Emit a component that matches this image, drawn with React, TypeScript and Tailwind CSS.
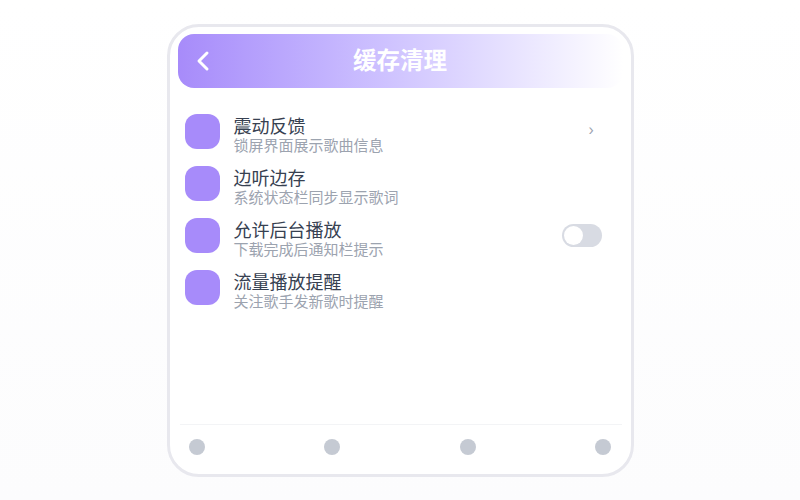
import { ChevronLeft } from 'lucide-react';

const rows = [
  { title: '震动反馈', sub: '锁屏界面展示歌曲信息', trailing: 'chevron' },
  { title: '边听边存', sub: '系统状态栏同步显示歌词', trailing: '' },
  { title: '允许后台播放', sub: '下载完成后通知栏提示', trailing: 'toggle' },
  { title: '流量播放提醒', sub: '关注歌手发新歌时提醒', trailing: '' },
];

const App = () => {
  return (
    <div className="h-screen w-full overflow-hidden pt-6 pl-[167px] bg-gradient-to-b from-white to-[#fcfcfd] font-['Inter','Noto_Sans_CJK_SC',sans-serif]">
      <div className="w-[467px] h-[453px] rounded-[32px] border-[3px] border-[#e8e8ee] bg-white pt-[7px] px-2 flex flex-col">
        <header className="relative h-[54px] rounded-2xl bg-gradient-to-r from-[#a78bfa] to-white flex items-center justify-center">
          <ChevronLeft className="absolute left-[9px] top-[11px] w-8 h-8 text-white" strokeWidth={2.25} />
          <h1 className="text-[23.5px] font-semibold text-white pr-px">缓存清理</h1>
        </header>
        <main className="flex-1 pt-[26px] pl-[7px] pr-[12px] flex flex-col gap-[17px]">
          {rows.map((row) => (
            <div key={row.title} className="h-[35px] flex items-center">
              <div className="w-[35px] h-[35px] rounded-xl bg-[#a78bfa] shrink-0" />
              <div className="ml-[13.5px] flex-1 pt-[8px]">
                <div className="text-lg leading-[20px] text-[#374151]">{row.title}</div>
                <div className="text-[15px] leading-[18px] text-[#9ca3af]">{row.sub}</div>
              </div>
              {row.trailing === 'chevron' && <span className="mr-[17px] -mt-[3px] text-sm text-[#9ca3af]">›</span>}
              {row.trailing === 'toggle' && (
                <div className="w-10 h-[23px] rounded-full bg-[#d8dbe3] p-[2px] mr-[9px]">
                  <div className="w-[19px] h-[19px] rounded-full bg-white" />
                </div>
              )}
            </div>
          ))}
        </main>
        <footer className="h-[47px] mb-[3px] ml-[2px] mr-px border-t border-[#f3f4f6] pb-[2px] pl-[9px] pr-[11px] flex items-center justify-between">
          {[0, 1, 2, 3].map((i) => (
            <div key={i} className="w-4 h-4 rounded-full bg-[#c5cad3]" />
          ))}
        </footer>
      </div>
    </div>
  );
};

export default App;
